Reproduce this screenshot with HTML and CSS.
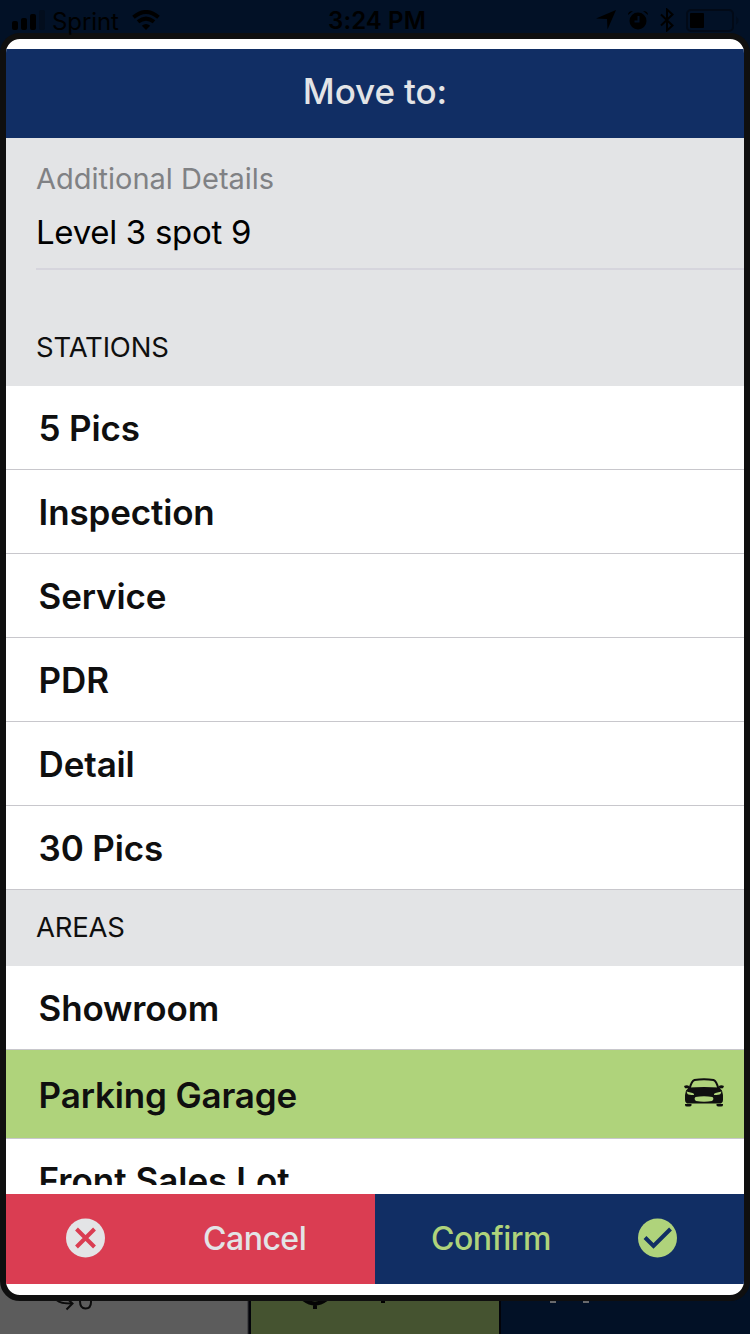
FILE: index.html
```html
<!DOCTYPE html>
<html lang="en">
<head>
<meta charset="utf-8">
<title>Move to</title>
<link rel="stylesheet" href="styles.css">
</head>
<body>
<div class="screen">
  <header class="status">
    <svg class="signal" width="34" height="20" viewBox="0 0 34 20"><rect x="0" y="11" width="6" height="9" rx="2"/><rect x="9" y="8" width="6" height="12" rx="2"/><rect x="18" y="4" width="6" height="16" rx="2"/><rect class="dim" x="27" y="0" width="6" height="20" rx="2"/></svg>
    <span class="carrier">Sprint</span>
    <svg class="wifi" width="28" height="20" viewBox="0 0 28 20"><path d="M14 20l-4.2-4.3q4.200-3.300 8.400 0z"/><path class="arc" d="M1.500 7.200q12.500-10.400 25 0M6 11.800q8-6.400 16 0"/></svg>
    <span class="clock">3:24 PM</span>
    <div class="indicators">
      <svg width="20" height="20" viewBox="0 0 20 20"><path d="M20 0L11.500 19.500 11 9 0 8.500z"/></svg>
      <svg width="20" height="20" viewBox="0 0 20 20"><circle cx="10" cy="11" r="8.500"/><path d="M0 5Q0 1 5 1zM20 5Q20 1 15 1z"/><path class="hand" d="M10.500 6v5.500H6.500"/></svg>
      <svg width="14" height="24" viewBox="0 0 14 24"><path class="line" d="M1 6.500l11.500 11L7 22.500v-21l5.500 5L1 17.500"/></svg>
      <svg width="53" height="23" viewBox="0 0 53 23"><rect class="case" x="1" y="1" width="46" height="21" rx="4"/><rect x="4" y="4" width="14" height="15" rx="1"/><path class="dim" d="M50 7.500q5 4 0 8z"/></svg>
    </div>
  </header>
  <main class="modal">
    <h1 class="title">Move to:</h1>
    <div class="list">
      <section class="details">
        <label class="label">Additional Details</label>
        <div class="value">Level 3 spot 9</div>
      </section>
      <h2 class="group">STATIONS</h2>
      <div class="row"><span>5 Pics</span></div>
      <div class="row"><span>Inspection</span></div>
      <div class="row"><span>Service</span></div>
      <div class="row"><span>PDR</span></div>
      <div class="row"><span>Detail</span></div>
      <div class="row"><span>30 Pics</span></div>
      <h2 class="group">AREAS</h2>
      <div class="row"><span>Showroom</span></div>
      <div class="row selected"><span>Parking Garage</span>
        <svg class="car" width="40" height="29" viewBox="0 0 40 29"><path class="roof" d="M5.500 11Q7.500 3 10.500 2 20 .3 29.500 2 32.500 3 34.500 11"/><path d="M5 9.500Q20 8.500 35 9.500L38 12.500Q39.500 17 39 22 39 25 37 25.500H3Q1 25 1 22 .5 17 2 12.500zM0 8q3-1.500 5 0l1 2-5 .3zM40 8q-3-1.500-5 0l-1 2 5 .3zM1 26h6.500v1.500Q7 28.500 5.500 28.500H3Q1 28.500 1 27zM39 26h-6.500v1.500q.5 1 2 1H37q2 0 2-1.500z"/><path class="lamp" d="M2.500 13.500l6 1.500q2 .7 1.500 2-5 0-6.500-1zM37.500 13.500l-6 1.500q-2 .7-1.500 2 5 0 6.500-1zM11.500 19q8.500-1.500 17 0 2 2-.5 4-8 1.500-16 0-2.500-2-.5-4z"/></svg>
      </div>
      <div class="row last"><span>Front Sales Lot</span></div>
    </div>
    <footer class="actions">
      <button class="cancel"><svg width="40" height="40" viewBox="0 0 40 40"><circle cx="20.500" cy="20" r="19.500"/><path d="M11.500 11l18 18m0-18l-18 18"/></svg><span>Cancel</span></button>
      <button class="confirm"><span>Confirm</span><svg width="40" height="40" viewBox="0 0 40 40"><circle cx="20.500" cy="20" r="19.500"/><path d="M8 19.500l8.500 8.500L33.500 11"/></svg></button>
    </footer>
  </main>
  <nav class="tabs">
    <div class="tab gray"><svg width="38" height="20" viewBox="0 0 38 20"><path d="M0 6q2 4.500 16 4.500M10.500 5l6 5.500-6 6M24 8q0 7.500 5.500 7.500T35 9q0-3-2-5"/></svg></div>
    <div class="tab olive"><svg width="90" height="14" viewBox="0 0 90 14"><path d="M0 3q13 11 26 0M13 7v7"/><rect x="79" y="0" width="4" height="8"/></svg></div>
    <div class="tab navy"><i></i><i></i></div>
  </nav>
</div>
</body>
</html>
```
FILE: styles.css
```css
* { box-sizing: border-box; }
body { margin: 0; font-family: Inter, Roboto, sans-serif; }
.screen { width: 750px; height: 1334px; overflow: hidden; background: linear-gradient(90deg, #5c5c5c 0 247px, #020309 249px 251px, #455330 251px 499px, #020309 499px 501px, #021126 501px) 0 700px / 750px 634px no-repeat, #021126; display: flex; flex-direction: column; }
svg { display: block; flex: none; }
.status { position: relative; height: 33px; display: flex; align-items: flex-start; padding: 10px 12px 0; font-size: 24px; line-height: 23px; }
.carrier { margin-left: 6px; letter-spacing: -.1px; }
.status .dim { fill: #020d1d; }
.wifi { margin-left: 13px; }
.wifi .arc { fill: none; stroke: #000; stroke-width: 4; }
.clock { position: absolute; left: 0; right: 0; text-align: center; top: 9px; padding-left: 4px; line-height: 24px; font-weight: 600; letter-spacing: .1px; }
.indicators { margin-left: auto; display: flex; align-items: center; gap: 12px; margin-top: -2px; margin-right: -1px; }
.line { fill: none; stroke: #000; stroke-width: 2; }
.hand { fill: none; stroke: #021126; stroke-width: 2; }
.case { fill: none; stroke: #020a17; stroke-width: 2; }
.modal { height: 1268px; flex: none; border: 6px solid #0f0f0f; border-radius: 20px; background: #fff; padding: 10px 0 11px; display: flex; flex-direction: column; overflow: hidden; }
.title { margin: 0; height: 89px; background: #112e64; color: #e3e4e6; text-align: center; font-size: 35px; line-height: 85px; font-weight: 550; letter-spacing: -.1px; }
.list { height: 1047px; overflow: hidden; background: #fff; }
.details { height: 172px; background: #e3e4e6; padding: 22px 0 0 30px; }
.label { display: block; color: #808184; font-size: 29px; line-height: 38px; }
.value { margin-top: 10px; height: 62px; border-bottom: 2px solid #d6d5dd; color: #000; font-size: 33px; line-height: 48px; letter-spacing: -.3px; }
.group { margin: 0; height: 76px; padding-left: 30px; background: #e3e4e6; color: #0f0f0f; font-size: 27.500px; line-height: 74px; font-weight: 400; letter-spacing: -.2px; }
.row { height: 84px; border-bottom: 1px solid #c8c7cc; padding: 0 20px 0 32.600px; display: flex; align-items: center; justify-content: space-between; color: #0f0f0f; font-size: 35px; font-weight: 600; letter-spacing: -.15px; }
.selected { height: 89px; padding-top: 2px; background: #afd37b; }
.last { padding-bottom: 2px; letter-spacing: 0; }
.car { margin-top: -6px; fill: #0f0f0f; }
.roof { fill: none; stroke: #0f0f0f; stroke-width: 2; }
.lamp { fill: #afd37b; }
.actions { height: 90px; margin-top: 9px; display: flex; }
.actions button { width: 369px; border: 0; padding: 0 0 1px; display: flex; align-items: center; font: 550 32px Inter, sans-serif; letter-spacing: -.5px; }
.cancel { background: #da3d52; color: #e3e4e6; }
.cancel svg { margin: -2px 0 0 59px; fill: #e3e4e6; }
.cancel span { margin-left: 98px; }
.cancel path { stroke: #da3d52; stroke-width: 4; }
.confirm { background: #112e64; color: #afd37b; justify-content: flex-end; }
.confirm svg { margin: -2px 67px 0 86px; fill: #afd37b; }
.confirm path { fill: none; stroke: #112e64; stroke-width: 4; }
.tabs { height: 33px; display: flex; }
.tab { width: 250px; overflow: hidden; }
.gray { padding-left: 56px; }
.gray svg { margin-top: -8px; fill: none; stroke: #0b0b0b; stroke-width: 2; }
.olive { padding-left: 52px; }
.olive svg { margin-top: -6px; }
.olive path { fill: none; stroke: #050505; stroke-width: 4; }
.navy { display: flex; gap: 27px; padding-left: 50px; }
.navy i { width: 6px; height: 2px; background: #686a6d; }
```
